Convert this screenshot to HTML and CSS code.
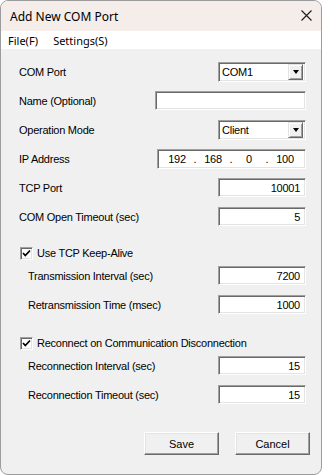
FILE: index.html
```html
<!DOCTYPE html>
<html lang="en">
<head>
    <meta charset="UTF-8">
    <title>Add New COM Port</title>
    <link rel="stylesheet" href="styles.css">
</head>
<body>
    <div class="window">
        <div class="titlebar">
            <span class="title">Add New COM Port</span>
            <svg class="close" width="11" height="11" viewBox="0 0 11 11">
                <path d="M0.5 0.5 L10.5 10.5 M10.5 0.5 L0.5 10.5" stroke="#1b1b1b" stroke-width="1.1" fill="none"/>
            </svg>
        </div>
        <div class="menubar">
            <span class="menu-item">File(F)</span>
            <span class="menu-item">Settings(S)</span>
        </div>

        <div class="content">
            <div class="row">
                <span class="label">COM Port</span>
                <div class="combo">
                    <span class="combo-text">COM1</span>
                    <span class="combo-btn"><span class="arrow"></span></span>
                </div>
            </div>
            <div class="row">
                <span class="label">Name (Optional)</span>
                <div class="field field-wide"></div>
            </div>
            <div class="row">
                <span class="label">Operation Mode</span>
                <div class="combo">
                    <span class="combo-text">Client</span>
                    <span class="combo-btn"><span class="arrow"></span></span>
                </div>
            </div>
            <div class="row">
                <span class="label">IP Address</span>
                <div class="field field-ip">
                    <span class="octet">192</span><span class="dot">.</span>
                    <span class="octet">168</span><span class="dot">.</span>
                    <span class="octet">0</span><span class="dot">.</span>
                    <span class="octet">100</span>
                </div>
            </div>
            <div class="row">
                <span class="label">TCP Port</span>
                <div class="field">10001</div>
            </div>
            <div class="row">
                <span class="label">COM Open Timeout (sec)</span>
                <div class="field">5</div>
            </div>

            <div class="check-row">
                <span class="checkbox">
                    <svg width="9" height="9" viewBox="0 0 9 9"><path d="M1 4 L3.3 6.5 L8 1.5" stroke="#000" stroke-width="1.7" fill="none"/></svg>
                </span>
                <span class="check-label">Use TCP Keep-Alive</span>
            </div>
            <div class="row sub">
                <span class="label">Transmission Interval (sec)</span>
                <div class="field">7200</div>
            </div>
            <div class="row sub">
                <span class="label">Retransmission Time (msec)</span>
                <div class="field">1000</div>
            </div>

            <div class="check-row check-second">
                <span class="checkbox">
                    <svg width="9" height="9" viewBox="0 0 9 9"><path d="M1 4 L3.3 6.5 L8 1.5" stroke="#000" stroke-width="1.7" fill="none"/></svg>
                </span>
                <span class="check-label">Reconnect on Communication Disconnection</span>
            </div>
            <div class="row sub">
                <span class="label">Reconnection Interval (sec)</span>
                <div class="field">15</div>
            </div>
            <div class="row sub">
                <span class="label">Reconnection Timeout (sec)</span>
                <div class="field">15</div>
            </div>

            <div class="buttons">
                <button class="btn">Save</button>
                <button class="btn">Cancel</button>
            </div>
        </div>
    </div>
</body>
</html>
```

FILE: styles.css
```css
body {
    margin: 0;
    background: #fff;
}
.window {
    width: 322px;
    height: 475px;
    box-sizing: border-box;
    border: 1px solid #9c9c9c;
    border-radius: 8px;
    overflow: hidden;
    background: #f0f0f0;
    display: flex;
    flex-direction: column;
}
.titlebar {
    height: 30px;
    background: #f4ede9;
    display: flex;
    align-items: center;
    justify-content: space-between;
    padding: 0 9px 0 9px;
}
.title {
    font-family: "Noto Sans", sans-serif;
    font-size: 12px;
    color: #000;
}
.close {
    margin-top: -1px;
}
.menubar {
    height: 18px;
    background: #fff;
    display: flex;
    align-items: center;
    padding-left: 7px;
    gap: 15px;
    font-family: "Noto Sans", sans-serif;
    font-size: 11px;
    color: #000;
}
.content {
    padding: 8px 15px 0 18px;
    font-family: "Liberation Sans", Arial, sans-serif;
    font-size: 11px;
    letter-spacing: -0.25px;
    color: #000;
}
.row {
    height: 29px;
    display: flex;
    align-items: center;
    justify-content: space-between;
}
.row.sub {
    padding-left: 9px;
}
.field, .combo {
    width: 88px;
    height: 19px;
    box-sizing: border-box;
    background: #fff;
    border-style: solid;
    border-width: 1px;
    border-color: #a0a0a0 #fff #fff #a0a0a0;
    box-shadow: inset 1px 1px 0 #696969, inset -1px -1px 0 #e3e3e3;
    display: flex;
    align-items: center;
    justify-content: flex-end;
    padding-right: 5px;
}
.field-wide {
    width: 151px;
}
.field-ip {
    width: 149px;
    height: 20px;
    justify-content: flex-start;
    padding-left: 4px;
}
.octet {
    width: 30px;
    text-align: center;
}
.dot {
    width: 6px;
    text-align: center;
}
.combo {
    height: 20px;
    justify-content: space-between;
    padding: 0 2px 0 3px;
}
.combo-btn {
    width: 15px;
    height: 16px;
    box-sizing: border-box;
    background: #f0f0f0;
    border-style: solid;
    border-width: 1px;
    border-color: #e3e3e3 #696969 #696969 #e3e3e3;
    box-shadow: inset 1px 1px 0 #fff, inset -1px -1px 0 #a0a0a0;
    display: flex;
    align-items: center;
    justify-content: center;
}
.arrow {
    width: 0;
    height: 0;
    border-left: 3.5px solid transparent;
    border-right: 3.5px solid transparent;
    border-top: 4px solid #000;
}
.check-row {
    height: 16px;
    margin-top: 14px;
    display: flex;
    align-items: center;
    gap: 4px;
    padding-left: 1px;
}
.check-second {
    margin-top: 16px;
}
.checkbox {
    width: 13px;
    height: 13px;
    box-sizing: border-box;
    background: #fff;
    border-style: solid;
    border-width: 1px;
    border-color: #a0a0a0 #fff #fff #a0a0a0;
    box-shadow: inset 1px 1px 0 #696969, inset -1px -1px 0 #e3e3e3;
    display: flex;
    align-items: center;
    justify-content: center;
}
.buttons {
    display: flex;
    justify-content: flex-end;
    gap: 16px;
    margin-top: 23px;
    margin-right: -4px;
}
.btn {
    width: 75px;
    height: 23px;
    background: #f0f0f0;
    font-family: "Liberation Sans", Arial, sans-serif;
    font-size: 11px;
    color: #000;
    border-style: solid;
    border-width: 1px;
    border-color: #fff #696969 #696969 #fff;
    box-shadow: inset -1px -1px 0 #a0a0a0, inset 1px 1px 0 #e3e3e3;
    padding: 0;
}
```
